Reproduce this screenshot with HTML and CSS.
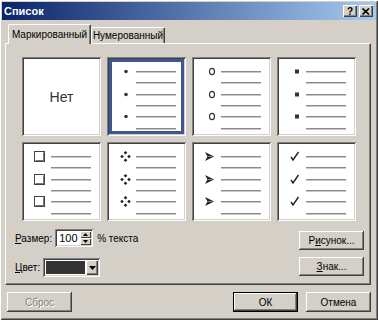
FILE: index.html
```html
<!doctype html>
<html lang="ru">
  <head>
    <meta charset="UTF-8" />
    <meta name="viewport" content="width=device-width, initial-scale=1.0" />
    <title>Список</title>
    <link rel="stylesheet" href="styles.css">
  </head>
  <body>
    <div class="window">
      <div class="titlebar">
        <span class="title">Список</span>
        <div class="caption-buttons">
          <span class="caption-btn">?</span>
          <span class="caption-btn close">
            <svg width="8" height="7" viewBox="0 0 8 7"><path d="M0.5 0.5 L7 6.5 M7 0.5 L0.5 6.5" stroke="#000" stroke-width="1.6" /></svg>
          </span>
        </div>
      </div>

      <div class="content">
        <div class="tabs">
          <div class="tab active">Маркированный</div>
          <div class="tab">Нумерованный</div>
        </div>

        <div class="panel">
          <div class="grid">
            <div class="cell none">Нет</div>

            <div class="cell selected">
              <div class="item"><div class="bullet"><svg width="29" height="13"><circle cx="19" cy="6.5" r="1.8" fill="#333" /></svg></div><div class="lines"><div class="line"></div><div class="line"></div></div></div>
              <div class="item"><div class="bullet"><svg width="29" height="13"><circle cx="19" cy="6.5" r="1.8" fill="#333" /></svg></div><div class="lines"><div class="line"></div><div class="line"></div></div></div>
              <div class="item"><div class="bullet"><svg width="29" height="13"><circle cx="19" cy="6.5" r="1.8" fill="#333" /></svg></div><div class="lines"><div class="line"></div><div class="line"></div></div></div>
            </div>

            <div class="cell">
              <div class="item"><div class="bullet"><svg width="29" height="13"><ellipse cx="20" cy="6.5" rx="2.5" ry="3.2" stroke="#333" stroke-width="1.2" fill="none" /></svg></div><div class="lines"><div class="line"></div><div class="line"></div></div></div>
              <div class="item"><div class="bullet"><svg width="29" height="13"><ellipse cx="20" cy="6.5" rx="2.5" ry="3.2" stroke="#333" stroke-width="1.2" fill="none" /></svg></div><div class="lines"><div class="line"></div><div class="line"></div></div></div>
              <div class="item"><div class="bullet"><svg width="29" height="13"><ellipse cx="20" cy="6.5" rx="2.5" ry="3.2" stroke="#333" stroke-width="1.2" fill="none" /></svg></div><div class="lines"><div class="line"></div><div class="line"></div></div></div>
            </div>

            <div class="cell">
              <div class="item"><div class="bullet"><svg width="29" height="13"><rect x="18" y="4.5" width="4" height="4" fill="#333" /></svg></div><div class="lines"><div class="line"></div><div class="line"></div></div></div>
              <div class="item"><div class="bullet"><svg width="29" height="13"><rect x="18" y="4.5" width="4" height="4" fill="#333" /></svg></div><div class="lines"><div class="line"></div><div class="line"></div></div></div>
              <div class="item"><div class="bullet"><svg width="29" height="13"><rect x="18" y="4.5" width="4" height="4" fill="#333" /></svg></div><div class="lines"><div class="line"></div><div class="line"></div></div></div>
            </div>

            <div class="cell">
              <div class="item"><div class="bullet"><svg width="29" height="13"><rect x="12.5" y="1.5" width="10" height="10" fill="#fff" stroke="#444" /><path d="M13.5 10.5 H22 M21.5 2.5 V10.5" stroke="#777" /></svg></div><div class="lines"><div class="line"></div><div class="line"></div></div></div>
              <div class="item"><div class="bullet"><svg width="29" height="13"><rect x="12.5" y="1.5" width="10" height="10" fill="#fff" stroke="#444" /><path d="M13.5 10.5 H22 M21.5 2.5 V10.5" stroke="#777" /></svg></div><div class="lines"><div class="line"></div><div class="line"></div></div></div>
              <div class="item"><div class="bullet"><svg width="29" height="13"><rect x="12.5" y="1.5" width="10" height="10" fill="#fff" stroke="#444" /><path d="M13.5 10.5 H22 M21.5 2.5 V10.5" stroke="#777" /></svg></div><div class="lines"><div class="line"></div><div class="line"></div></div></div>
            </div>

            <div class="cell">
              <div class="item"><div class="bullet"><svg width="29" height="13"><path d="M18.5 1 L20.3 2.8 L18.5 4.6 L16.7 2.8 Z M15 4.7 L16.8 6.5 L15 8.3 L13.2 6.5 Z M22 4.7 L23.8 6.5 L22 8.3 L20.2 6.5 Z M18.5 8.4 L20.3 10.2 L18.5 12 L16.7 10.2 Z" fill="#222" /></svg></div><div class="lines"><div class="line"></div><div class="line"></div></div></div>
              <div class="item"><div class="bullet"><svg width="29" height="13"><path d="M18.5 1 L20.3 2.8 L18.5 4.6 L16.7 2.8 Z M15 4.7 L16.8 6.5 L15 8.3 L13.2 6.5 Z M22 4.7 L23.8 6.5 L22 8.3 L20.2 6.5 Z M18.5 8.4 L20.3 10.2 L18.5 12 L16.7 10.2 Z" fill="#222" /></svg></div><div class="lines"><div class="line"></div><div class="line"></div></div></div>
              <div class="item"><div class="bullet"><svg width="29" height="13"><path d="M18.5 1 L20.3 2.8 L18.5 4.6 L16.7 2.8 Z M15 4.7 L16.8 6.5 L15 8.3 L13.2 6.5 Z M22 4.7 L23.8 6.5 L22 8.3 L20.2 6.5 Z M18.5 8.4 L20.3 10.2 L18.5 12 L16.7 10.2 Z" fill="#222" /></svg></div><div class="lines"><div class="line"></div><div class="line"></div></div></div>
            </div>

            <div class="cell">
              <div class="item"><div class="bullet"><svg width="29" height="13"><path d="M13 2 L22 6.5 L13 11 L15.5 6.5 Z" fill="#222" /><path d="M15.5 6.5 L20 6.5" stroke="#888" /></svg></div><div class="lines"><div class="line"></div><div class="line"></div></div></div>
              <div class="item"><div class="bullet"><svg width="29" height="13"><path d="M13 2 L22 6.5 L13 11 L15.5 6.5 Z" fill="#222" /><path d="M15.5 6.5 L20 6.5" stroke="#888" /></svg></div><div class="lines"><div class="line"></div><div class="line"></div></div></div>
              <div class="item"><div class="bullet"><svg width="29" height="13"><path d="M13 2 L22 6.5 L13 11 L15.5 6.5 Z" fill="#222" /><path d="M15.5 6.5 L20 6.5" stroke="#888" /></svg></div><div class="lines"><div class="line"></div><div class="line"></div></div></div>
            </div>

            <div class="cell">
              <div class="item"><div class="bullet"><svg width="29" height="13"><path d="M14 7 L16 10 L21.5 2" stroke="#222" stroke-width="1.4" fill="none" /></svg></div><div class="lines"><div class="line"></div><div class="line"></div></div></div>
              <div class="item"><div class="bullet"><svg width="29" height="13"><path d="M14 7 L16 10 L21.5 2" stroke="#222" stroke-width="1.4" fill="none" /></svg></div><div class="lines"><div class="line"></div><div class="line"></div></div></div>
              <div class="item"><div class="bullet"><svg width="29" height="13"><path d="M14 7 L16 10 L21.5 2" stroke="#222" stroke-width="1.4" fill="none" /></svg></div><div class="lines"><div class="line"></div><div class="line"></div></div></div>
            </div>
          </div>

          <div class="options">
            <div class="fields">
              <div class="field">
                <span class="label"><u>Р</u>азмер:</span>
                <div class="spin">
                  <span class="spin-value">100</span>
                  <div class="spin-buttons">
                    <span class="spin-btn"><svg width="5" height="3"><path d="M2.5 0 L5 3 L0 3 Z" fill="#000" /></svg></span>
                    <span class="spin-btn"><svg width="5" height="3"><path d="M0 0 L5 0 L2.5 3 Z" fill="#000" /></svg></span>
                  </div>
                </div>
                <span class="unit">% текста</span>
              </div>
              <div class="field color-field">
                <span class="label"><u>Ц</u>вет:</span>
                <div class="combo">
                  <span class="swatch"></span>
                  <span class="combo-btn"><svg width="7" height="4"><path d="M0 0 L7 0 L3.5 4 Z" fill="#000" /></svg></span>
                </div>
              </div>
            </div>
            <div class="side-buttons">
              <button class="btn">Р<u>и</u>сунок...</button>
              <button class="btn"><u>З</u>нак...</button>
            </div>
          </div>
        </div>

        <div class="footer">
          <button class="btn disabled">Сброс</button>
          <div class="footer-right">
            <button class="btn default">ОК</button>
            <button class="btn">Отмена</button>
          </div>
        </div>
      </div>
    </div>
  </body>
</html>
```

FILE: styles.css
```css
body {
  margin: 0;
  font-family: "Liberation Sans", Arial, sans-serif;
  font-size: 10px;
  color: #000;
  background: #d4d0c8;
}
.window {
  width: 378px;
  height: 320px;
  box-sizing: border-box;
  background: #d4d0c8;
  box-shadow: inset 1px 1px #fff, inset -1px -1px #404040, inset 2px 2px #d4d0c8, inset -2px -2px #808080;
  overflow: hidden;
}
.titlebar {
  margin: 2px 2px 0 2px;
  height: 18px;
  display: flex;
  align-items: center;
  justify-content: space-between;
  background: linear-gradient(to right, #0a246a, #a6caf0);
}
.title {
  color: #fff;
  font-weight: bold;
  font-size: 11px;
  padding-left: 2px;
}
.caption-buttons {
  display: flex;
  gap: 2px;
  padding-right: 3px;
}
.caption-btn {
  width: 14px;
  height: 12px;
  box-sizing: border-box;
  display: flex;
  align-items: center;
  justify-content: center;
  font-weight: bold;
  font-size: 10px;
  background: #d4d0c8;
  box-shadow: inset 1px 1px #fff, inset -1px -1px #404040, inset -2px -2px #808080;
}
.content {
  padding: 0 7px 0 5px;
}
.tabs {
  display: flex;
  align-items: flex-end;
  margin-top: 4px;
  height: 19px;
  padding-left: 3px;
}
.tab {
  height: 16px;
  width: 74px;
  box-sizing: border-box;
  display: flex;
  align-items: center;
  justify-content: center;
  border-top: 1px solid #fff;
  border-left: 1px solid #fff;
  border-right: 1px solid #404040;
  box-shadow: inset -1px 0 #808080;
  border-radius: 2px 2px 0 0;
  background: #d4d0c8;
  white-space: nowrap;
  overflow: hidden;
}
.tab.active {
  position: relative;
  z-index: 1;
  width: 83px;
  height: 20px;
  margin-bottom: -1px;
  padding-bottom: 1px;
}
.panel {
  height: 242px;
  box-sizing: border-box;
  border-top: 1px solid #fff;
  border-left: 1px solid #fff;
  border-right: 1px solid #404040;
  border-bottom: 1px solid #404040;
  box-shadow: inset -1px -1px #808080;
  padding: 13px 6px 6px 9px;
}
.grid {
  display: grid;
  grid-template-columns: repeat(4, 79px);
  grid-auto-rows: 79px;
  gap: 6px;
  margin-left: 7px;
}
.cell {
  background: #fff;
  box-shadow: inset 1px 1px #808080, inset -1px -1px #fff, inset 2px 2px #404040, inset -2px -2px #d4d0c8;
  padding-top: 14px;
  box-sizing: border-box;
}
.cell.selected {
  box-shadow: inset 1px 1px #808080, inset -1px -1px #fff, inset 2px 2px #404040, inset -2px -2px #d4d0c8, inset 0 0 0 5px #3b5894;
}
.cell.none {
  padding: 0;
  display: flex;
  align-items: center;
  justify-content: center;
  font-size: 14px;
  color: #333;
}
.item {
  display: flex;
}
.bullet {
  width: 29px;
  height: 1px;
  display: flex;
  align-items: center;
}
.bullet svg {
  display: block;
  flex: none;
}
.lines {
  width: 40px;
}
.line {
  height: 11.33px;
  box-sizing: border-box;
  border-top: 1px solid #8a8a8a;
}
.line::before {
  content: "";
  display: block;
  height: 1px;
  background: #c8c8c8;
}
.options {
  display: flex;
  justify-content: space-between;
  margin-top: 8px;
}
.fields {
  display: flex;
  flex-direction: column;
  gap: 11px;
}
.field {
  display: flex;
  align-items: center;
  height: 18px;
}
.color-field {
  height: 19px;
}
.label {
  flex: none;
  white-space: nowrap;
  margin-right: 3px;
}
.spin {
  width: 38px;
  height: 18px;
  box-sizing: border-box;
  display: flex;
  align-items: center;
  justify-content: space-between;
  background: #fff;
  box-shadow: inset 1px 1px #808080, inset -1px -1px #fff, inset 2px 2px #404040, inset -2px -2px #d4d0c8;
  padding: 2px;
  font-size: 11px;
}
.spin-value {
  padding-left: 2px;
}
.spin-buttons {
  display: flex;
  flex-direction: column;
  width: 11px;
  height: 14px;
}
.spin-btn {
  flex: 1;
  display: flex;
  align-items: center;
  justify-content: center;
  background: #d4d0c8;
  box-shadow: inset 1px 1px #fff, inset -1px -1px #404040;
}
.spin-btn svg {
  display: block;
}
.unit {
  margin-left: 4px;
}
.combo {
  width: 57px;
  height: 19px;
  box-sizing: border-box;
  display: flex;
  align-items: stretch;
  background: #fff;
  box-shadow: inset 1px 1px #808080, inset -1px -1px #fff, inset 2px 2px #404040, inset -2px -2px #d4d0c8;
  padding: 2px;
  gap: 1px;
}
.swatch {
  flex: 1;
  margin: 1px 0 1px 1px;
  background: #333;
}
.combo-btn {
  width: 12px;
  display: flex;
  align-items: center;
  justify-content: center;
  background: #d4d0c8;
  box-shadow: inset 1px 1px #fff, inset -1px -1px #404040, inset -2px -2px #808080;
}
.combo-btn svg {
  display: block;
}
.side-buttons {
  display: flex;
  flex-direction: column;
  gap: 7px;
  padding-top: 2px;
}
.btn {
  width: 65px;
  height: 19px;
  padding: 0;
  border: none;
  font: inherit;
  color: #000;
  background: #d4d0c8;
  box-shadow: inset -1px -1px #404040, inset 1px 1px #fff, inset -2px -2px #808080;
}
.footer {
  display: flex;
  justify-content: space-between;
  margin-top: 7px;
  padding-left: 2px;
}
.footer .btn {
  height: 20px;
}
.footer-right {
  display: flex;
  gap: 8px;
}
.btn.default {
  box-shadow: inset 0 0 0 1px #000, inset -2px -2px #404040, inset 2px 2px #fff, inset -3px -3px #808080;
}
.btn.disabled {
  color: #808080;
  text-shadow: 1px 1px #fff;
}
```
